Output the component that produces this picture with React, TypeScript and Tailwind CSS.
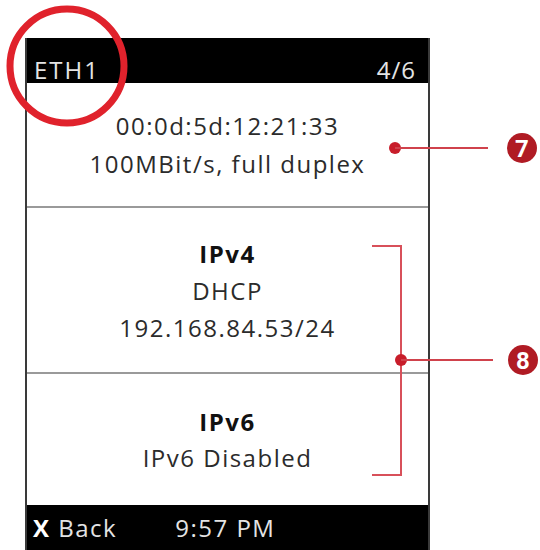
export default function App() {
  return (
    <div
      className="relative w-[540px] h-[550px] bg-white overflow-hidden pt-[38px] pl-[25px]"
      style={{ fontFamily: "'Open Sans', 'Liberation Sans', sans-serif" }}
    >
      <div className="w-[405px] h-[512px] flex flex-col border-x-2 border-[#3a3a3a]">
        <div className="h-[45px] bg-black flex items-end justify-between pl-[7px] pr-[12px] pb-[1px] text-[24px] leading-none text-[#e4e4e4]">
          <span className="tracking-[2px]">ETH1</span>
          <span className="tracking-[1px]">4/6</span>
        </div>

        <div className="h-[125px] flex flex-col items-center justify-center text-[24px] leading-[38px] tracking-[1.5px] text-[#2b2b2b] border-b-2 border-[#9a9a9a]">
          <span>00:0d:5d:12:21:33</span>
          <span>100MBit/s, full duplex</span>
        </div>

        <div className="h-[166px] flex flex-col items-center justify-center text-[24px] leading-[37px] tracking-[1.5px] text-[#2b2b2b] border-b-2 border-[#9a9a9a]">
          <span className="font-bold text-[#111]">IPv4</span>
          <span>DHCP</span>
          <span>192.168.84.53/24</span>
        </div>

        <div className="h-[131px] flex flex-col items-center justify-center text-[24px] leading-[36px] tracking-[1.5px] text-[#2b2b2b]">
          <span className="font-bold text-[#111]">IPv6</span>
          <span>IPv6 Disabled</span>
        </div>

        <div className="flex-1 bg-black flex items-center gap-[58px] px-[6px] text-[24px] tracking-[1.5px] text-[#e4e4e4]">
          <span>
            <span className="font-bold text-white">X</span> Back
          </span>
          <span>9:57 PM</span>
        </div>
      </div>

      <svg className="absolute inset-0" width="540" height="550" viewBox="0 0 540 550">
        <circle cx="67" cy="66" r="57" fill="none" stroke="#e0222c" strokeWidth="7" />
        <circle cx="395" cy="148" r="6" fill="#c81d2a" />
        <line x1="395" y1="148" x2="488" y2="148" stroke="#d0424c" strokeWidth="2" />
        <circle cx="522" cy="148" r="15" fill="#b01b24" />
        <text x="522" y="157" textAnchor="middle" fill="#fff" fontSize="24" fontWeight="bold" fontFamily="Roboto, sans-serif">7</text>
        <polyline points="372,246 401,246 401,475 372,475" fill="none" stroke="#d8505a" strokeWidth="2" />
        <circle cx="401" cy="360" r="6" fill="#c81d2a" />
        <line x1="401" y1="360" x2="493" y2="360" stroke="#d0424c" strokeWidth="2" />
        <circle cx="523" cy="360" r="15" fill="#b01b24" />
        <text x="523" y="369" textAnchor="middle" fill="#fff" fontSize="24" fontWeight="bold" fontFamily="Roboto, sans-serif">8</text>
      </svg>
    </div>
  );
}
